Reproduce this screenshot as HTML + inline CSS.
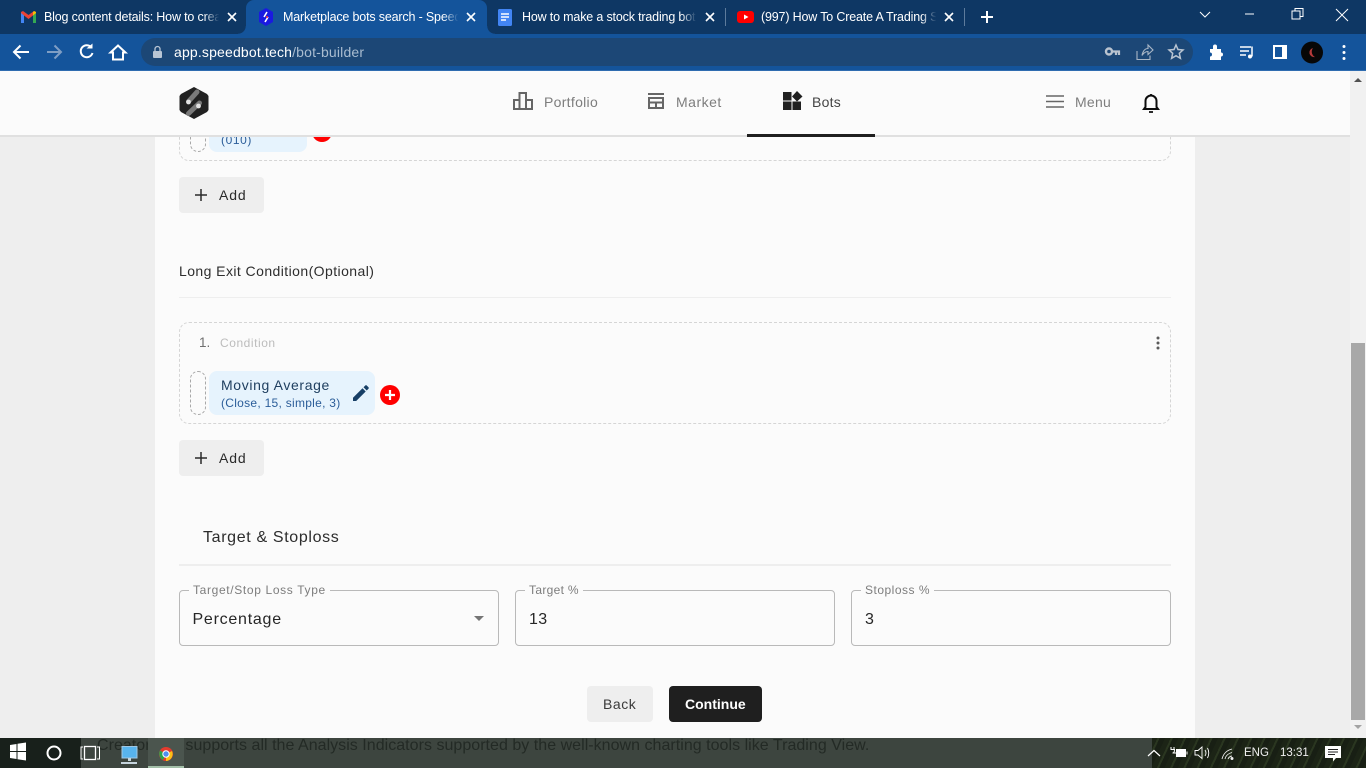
<!DOCTYPE html>
<html><head><meta charset="utf-8"><title>Bot Builder</title>
<style>
*{box-sizing:border-box}
html,body{margin:0;padding:0;width:1366px;height:768px;overflow:hidden;background:#eee;font-family:"Liberation Sans",sans-serif}
.a{position:absolute}
.t{position:absolute;white-space:nowrap;line-height:1}
svg{position:absolute;overflow:visible}
.fade{position:absolute;top:8px;width:18px;height:20px}
.ib{background:#fbfbfb;padding:0 4px}
.fs{position:absolute;top:590px;height:56px;width:320px;border:1px solid #b9b9b9;border-radius:4px}
.tab{position:absolute;top:11px;font-size:12.5px;line-height:1;color:#fff;white-space:nowrap;overflow:hidden;width:175px;letter-spacing:-.17px}
</style></head><body>
<!-- chrome tab strip -->
<div class="a" style="left:0;top:0;width:1366px;height:34px;background:#0e3764"></div>
<div class="a" style="left:0;top:34px;width:1366px;height:37px;background:#14549b"></div>
<div class="a" style="left:0;top:70px;width:1366px;height:1px;background:#2f6cb0"></div>
<div class="a" style="left:246px;top:0;width:241px;height:35px;background:#14549b;border-radius:8px 8px 0 0"></div>
<div class="a" style="left:238px;top:26px;width:8px;height:8px;background:radial-gradient(circle at 0 0,#0e3764 7.500px,#14549b 8px)"></div>
<div class="a" style="left:487px;top:26px;width:8px;height:8px;background:radial-gradient(circle at 100% 0,#0e3764 7.500px,#14549b 8px)"></div>
<!-- tab icons -->
<svg style="left:21px;top:10px" width="15" height="14" viewBox="0 0 15 14"><path d="M0 2V13H3V5.500L7.500 9 12 5.500V13H15V2L13 1 7.500 5 2 1Z" fill="#ea4335"/><path d="M0 3V13H3V5.500Z" fill="#4285f4"/><path d="M15 3V13H12V5.500Z" fill="#34a853"/><path d="M15 2 13 1 12 2V5.500L15 3Z" fill="#fbbc04"/></svg>
<svg style="left:258px;top:8px" width="16" height="18" viewBox="0 0 16 18"><path d="M8 0 15 4V14L8 18 1 14V4Z" fill="#1a1ae0"/><path d="M9 4 6 9M10 9 7 14" stroke="#fff" stroke-width="1.600"/><circle cx="9" cy="9" r="1" fill="#f33"/></svg>
<svg style="left:498px;top:9px" width="14" height="17" viewBox="0 0 14 17"><rect width="14" height="17" rx="1.500" fill="#4285f4"/><path d="M3 5H11M3 8H11M3 11H8" stroke="#fff" stroke-width="1.400"/></svg>
<svg style="left:737px;top:11px" width="17" height="12" viewBox="0 0 17 12"><rect width="17" height="12" rx="3" fill="#f00"/><path d="M7 3.500 11.500 6 7 8.500Z" fill="#fff"/></svg>
<div class="tab" style="left:44px">Blog content details: How to create</div>
<div class="tab" style="left:283px">Marketplace bots search - Speedbot</div>
<div class="tab" style="left:522px">How to make a stock trading bot</div>
<div class="tab" style="left:761px">(997) How To Create A Trading Strategy</div>
<div class="fade" style="left:204px;background:linear-gradient(90deg,rgba(14,55,100,0),#0e3764 85%)"></div>
<div class="fade" style="left:443px;background:linear-gradient(90deg,rgba(20,84,155,0),#14549b 85%)"></div>
<div class="fade" style="left:681px;background:linear-gradient(90deg,rgba(14,55,100,0),#0e3764 85%)"></div>
<div class="fade" style="left:921px;background:linear-gradient(90deg,rgba(14,55,100,0),#0e3764 85%)"></div>
<svg style="left:0;top:0" width="1366" height="71" viewBox="0 0 1366 71" fill="none" stroke="#fff" stroke-width="1.600">
<path d="M228 13 236 21M236 13 228 21M467 13 475 21M475 13 467 21M706 13 714 21M714 13 706 21M945 13 953 21M953 13 945 21"/>
<path d="M725.500 8V26M964.500 8V26" stroke="#5d7b9c" stroke-width="1"/>
<path d="M981 17H993M987 11V23" stroke-width="2"/>
<path d="M1200 12 1205 17 1210 12M1245 14H1254" stroke-width="1"/>
<path d="M1292 11H1300V19H1292ZM1295 11V8.500H1303V16.500H1300M1336 9 1348 21M1348 9 1336 21" stroke-width="1"/>
<path d="M29 52H14M20.500 45.500 14 52 20.500 58.500" stroke-width="2"/>
<path d="M47 52H61M54.500 45.500 61 52 54.500 58.500" stroke="#7f9ec4" stroke-width="2"/>
<path d="M91.500 47.500A6 6 0 1 0 92.500 53" stroke-width="2"/>
<path d="M86.500 48.500H92.500V43.500Z" fill="#fff" stroke="none"/>
<path d="M113 52.500V59.500H123V52.500H125.500L118 45.500 110.500 52.500Z" stroke-width="2"/>
</svg>
<!-- omnibox -->
<div class="a" style="left:141px;top:38px;width:1052px;height:28px;border-radius:14px;background:#1c4776"></div>
<svg style="left:153px;top:46px" width="9" height="12" viewBox="0 0 9 12"><rect y="5" width="9" height="7" rx="1" fill="#b8c5d4"/><path d="M2 5V3A2.500 2.500 0 0 1 7 3V5" fill="none" stroke="#b8c5d4" stroke-width="1.300"/></svg>
<div class="t" style="left:174px;top:45px;font-size:14px;letter-spacing:.17px;color:#fff">app.speedbot.tech<span style="color:#a9bcd0">/bot-builder</span></div>
<svg style="left:1100px;top:40px" width="260" height="26" viewBox="0 0 260 26" fill="none">
<circle cx="9" cy="11.500" r="3" stroke="#b9c3cf" stroke-width="2.400"/><path d="M12 11.500H19V15M16 11.500V15" stroke="#b9c3cf" stroke-width="2.200"/>
<path d="M37 11V19.500H50V15.500M42 15.500C43 10.500 45 8.500 48 8.500V5L53 10 48 14.500V11.500C46 11.500 44 12.500 42 15.500Z" stroke="#a9b6c6" stroke-width="1.100"/>
<path d="M76 5 78 9.500 83 10 79.300 13.300 80.400 18.300 76 15.700 71.600 18.300 72.700 13.300 69 10 74 9.500Z" stroke="#b9c4d1" stroke-width="1.500"/>
<path d="M110 9H113V6.500A2 2 0 0 1 117 6.500V9H121V12.500A2 2 0 0 1 121 16.500V20H110V16.500A2 2 0 0 0 110 12.500Z" fill="#fff"/>
<path d="M140 7H151M140 11H149M140 15H146M152 6.500V16.500" stroke="#fff" stroke-width="1.500"/><circle cx="150" cy="16.500" r="2" fill="#fff"/>
<rect x="174" y="6" width="12" height="12" stroke="#fff" stroke-width="2"/><rect x="182" y="6" width="4" height="12" fill="#fff"/>
<circle cx="212" cy="12.500" r="11" fill="#070707"/><path d="M213 8A4.500 4.500 0 0 0 215 17 6 6 0 0 1 213 8Z" fill="#b53a3a"/>
<circle cx="244" cy="6.500" r="1.500" fill="#fff"/><circle cx="244" cy="12.500" r="1.500" fill="#fff"/><circle cx="244" cy="18.500" r="1.500" fill="#fff"/>
</svg>

<!-- page -->
<div class="a" style="left:155px;top:71px;width:1040px;height:667px;background:#fbfbfb"></div>
<div class="a" style="left:1350px;top:71px;width:16px;height:667px;background:#f1f1f1"></div>
<div class="a" style="left:1351px;top:343px;width:14px;height:377px;background:#a8a8a8"></div>
<svg style="left:1350px;top:71px" width="16" height="667" viewBox="0 0 16 667"><path d="M8 7 12 11H4Z" fill="#505050"/><path d="M4 654H12L8 658Z" fill="#a3a3a3"/></svg>

<!-- first condition remainder -->
<div class="a" style="left:179px;top:100px;width:992px;height:61px;border:1px dashed #d5d5d5;border-radius:10px"></div>
<div class="a" style="left:190px;top:108px;width:16px;height:44px;border:1px dashed #a8a8a8;border-radius:8px"></div>
<div class="a" style="left:209px;top:108px;width:98px;height:44px;background:#e6f3fd;border-radius:8px"></div>
<div class="t" style="left:221px;top:134px;font-size:12px;letter-spacing:.6px;color:#2b5d99">(010)</div>
<div class="a" style="left:285px;top:136px;width:3px;height:1px;background:#3f6a94"></div>
<div class="a" style="left:312px;top:122px;width:20px;height:20px;border-radius:50%;background:#f00"></div>

<!-- header -->
<div class="a" style="left:0;top:71px;width:1350px;height:64px;background:#fbfbfb"></div>
<div class="a" style="left:0;top:135px;width:1350px;height:2px;background:#e0e0e0"></div>
<div class="a" style="left:747px;top:134px;width:128px;height:3px;background:#1f1f1f"></div>
<svg style="left:179px;top:87px" width="30" height="32" viewBox="0 0 30 32"><path d="M15 0 28 7 29.500 9V23L28 25 15 32 2 25 .500 23V9L2 7Z" fill="#212121"/><path d="M9.500 14.500 18 5M9.500 26.500 20.500 16" stroke="#7a7a7a" stroke-width="5" stroke-linecap="round" fill="none"/><circle cx="9.500" cy="15" r="2.400" fill="#e2e2e2"/><circle cx="19.500" cy="19" r="2.400" fill="#e2e2e2"/></svg>
<svg style="left:513px;top:92px" width="20" height="18" viewBox="0 0 20 18" fill="none" stroke="#666" stroke-width="2"><path d="M1 17V8H6.500V17ZM6.500 17V1H13V17ZM13 17V8H19V17Z"/></svg>
<div class="t" style="left:544px;top:95px;font-size:14px;letter-spacing:.3px;color:#7d7d7d">Portfolio</div>
<svg style="left:647px;top:93px" width="18" height="16" viewBox="0 0 18 16" fill="none" stroke="#666" stroke-width="2"><path d="M1 1H17M1 5H17M2 5V15H16V5M2 9.500H16M9 9.500V15"/></svg>
<div class="t" style="left:676px;top:95px;font-size:14px;letter-spacing:.5px;color:#7d7d7d">Market</div>
<svg style="left:783px;top:91px" width="20" height="19" viewBox="0 0 20 19" fill="#212121"><rect y="1" width="8.500" height="8.500"/><rect y="10.500" width="8.500" height="8.500"/><rect x="9.500" y="10.500" width="8.500" height="8.500"/><path d="M14 0 19.500 5.500 14 10.500 9 5.500Z"/></svg>
<div class="t" style="left:812px;top:95px;font-size:14px;letter-spacing:.25px;color:#444">Bots</div>
<svg style="left:1046px;top:95px" width="18" height="13" viewBox="0 0 18 13" stroke="#666" stroke-width="1.600"><path d="M0 1H18M0 6.500H18M0 12H18"/></svg>
<div class="t" style="left:1075px;top:95px;font-size:14px;letter-spacing:.25px;color:#7d7d7d">Menu</div>
<svg style="left:1142px;top:93px" width="18" height="20" viewBox="0 0 18 20" fill="none" stroke="#0c0c0c" stroke-width="2"><path d="M2 16H16L14.500 14V8A5.500 5.500 0 0 0 3.500 8V14Z"/><path d="M7 19H11M9 1V2.500" stroke-width="1.800"/></svg>

<!-- Add 1 -->
<div class="a" style="left:179px;top:177px;width:85px;height:36px;background:#eee;border-radius:4px"></div>
<svg style="left:195px;top:189px" width="12" height="12" viewBox="0 0 12 12" stroke="#2a2a2a" stroke-width="1.500"><path d="M0 6H12M6 0V12"/></svg>
<div class="t" style="left:219px;top:188px;font-size:14px;letter-spacing:.9px;color:#2a2a2a">Add</div>

<div class="t" style="left:179px;top:264px;font-size:14px;letter-spacing:.43px;color:#2e2e2e">Long Exit Condition(Optional)</div>
<div class="a" style="left:179px;top:297px;width:992px;height:1px;background:#eee"></div>

<!-- condition box -->
<div class="a" style="left:179px;top:322px;width:992px;height:102px;border:1px dashed #d5d5d5;border-radius:10px"></div>
<div class="t" style="left:199px;top:336px;font-size:13.500px;color:#6f6f6f">1.</div>
<div class="t" style="left:220px;top:337px;font-size:12px;letter-spacing:.55px;color:#bcbcbc">Condition</div>
<svg style="left:1156px;top:336px" width="4" height="14" viewBox="0 0 4 14" fill="#5a5a5a"><circle cx="2" cy="2" r="1.500"/><circle cx="2" cy="7" r="1.500"/><circle cx="2" cy="12" r="1.500"/></svg>
<div class="a" style="left:190px;top:371px;width:16px;height:44px;border:1px dashed #a8a8a8;border-radius:8px"></div>
<div class="a" style="left:209px;top:371px;width:166px;height:44px;background:#e6f3fd;border-radius:8px"></div>
<div class="t" style="left:221px;top:378px;font-size:14px;letter-spacing:.63px;color:#1f3f60">Moving Average</div>
<div class="t" style="left:221px;top:397px;font-size:12px;letter-spacing:.28px;color:#2b5d99">(Close, 15, simple, 3)</div>
<svg style="left:353px;top:385px" width="16" height="16" viewBox="0 0 16 16"><path d="M0 16V12.800L9.500 3.300 12.700 6.500 3.200 16ZM10.500 2.300 12.300.5A1 1 0 0 1 13.700.5L15.500 2.300A1 1 0 0 1 15.500 3.700L13.700 5.500Z" fill="#173f66"/></svg>
<div class="a" style="left:380px;top:385px;width:20px;height:20px;border-radius:50%;background:#f00"></div>
<svg style="left:380px;top:385px" width="20" height="20" viewBox="0 0 20 20" stroke="#fff" stroke-width="2.200"><path d="M5 10H15M10 5V15"/></svg>

<!-- Add 2 -->
<div class="a" style="left:179px;top:440px;width:85px;height:36px;background:#eee;border-radius:4px"></div>
<svg style="left:195px;top:452px" width="12" height="12" viewBox="0 0 12 12" stroke="#2a2a2a" stroke-width="1.500"><path d="M0 6H12M6 0V12"/></svg>
<div class="t" style="left:219px;top:451px;font-size:14px;letter-spacing:.9px;color:#2a2a2a">Add</div>

<div class="t" style="left:203px;top:530px;font-size:16px;letter-spacing:.65px;color:#2c2c2c">Target &amp; Stoploss</div>
<div class="a" style="left:179px;top:564px;width:992px;height:2px;background:#eee"></div>

<!-- fields -->
<div class="fs" style="left:179px"></div>
<div class="fs" style="left:515px"></div>
<div class="fs" style="left:851px"></div>
<div class="t ib" style="left:189px;top:584px;font-size:12px;letter-spacing:.65px;color:#7d7d7d">Target/Stop Loss Type</div>
<div class="t ib" style="left:525px;top:584px;font-size:12px;letter-spacing:.32px;color:#7d7d7d">Target %</div>
<div class="t ib" style="left:861px;top:584px;font-size:12px;letter-spacing:.5px;color:#7d7d7d">Stoploss %</div>
<div class="t" style="left:192.500px;top:612px;font-size:16px;letter-spacing:.75px;color:#262626">Percentage</div>
<svg style="left:474px;top:616px" width="10" height="5" viewBox="0 0 10 5"><path d="M0 0H10L5 5Z" fill="#757575"/></svg>
<div class="t" style="left:529px;top:612px;font-size:16px;letter-spacing:.4px;color:#262626">13</div>
<div class="t" style="left:865px;top:612px;font-size:16px;color:#262626">3</div>

<!-- buttons -->
<div class="a" style="left:587px;top:686px;width:66px;height:36px;background:#eee;border-radius:4px"></div>
<div class="t" style="left:603px;top:697px;font-size:14px;letter-spacing:.55px;color:#3a3a3a">Back</div>
<div class="a" style="left:669px;top:686px;width:93px;height:36px;background:#1f1f1f;border-radius:4px"></div>
<div class="t" style="left:685px;top:697px;font-size:14px;font-weight:bold;color:#fff">Continue</div>

<!-- taskbar -->
<div class="a" style="left:0;top:738px;width:1366px;height:30px;background:#3d453f"></div>
<div class="a" style="left:0;top:738px;width:81px;height:30px;background:#18201b"></div>
<div class="a" style="left:1152px;top:738px;width:214px;height:30px;background:repeating-linear-gradient(115deg,#1c2416 0 5px,#2a3620 5px 7px,#181f14 7px 12px)"></div>
<div class="t" style="left:97px;top:738px;font-size:16px;letter-spacing:.03px;color:#232a25">Creator tool supports all the Analysis Indicators supported by the well-known charting tools like Trading View.</div>
<div class="a" style="left:148px;top:738px;width:36px;height:30px;background:#4b554e"></div>
<div class="a" style="left:148px;top:766px;width:36px;height:2px;background:#a3bfa8"></div>
<svg style="left:0;top:738px" width="1366" height="30" viewBox="0 0 1366 30" fill="none">
<path d="M10 13V7L16.500 6V13ZM17.500 5.800 26 4.500V13H17.500ZM10 14H16.500V21L10 20ZM17.500 14H26V22.500L17.500 21.200Z" fill="#fff"/>
<circle cx="54" cy="15" r="6.500" stroke="#fff" stroke-width="2"/>
<rect x="84.500" y="8.500" width="11" height="13" stroke="#fff" stroke-width="1.300"/><path d="M83 9H81V21H83M97 9H99.500V21H97" stroke="#fff"/>
<path d="M122 8.500H137V20H122Z" fill="#58b4ee" stroke="#9fc7e4"/><path d="M128 20H131V23H128ZM121 24H137V26H121Z" fill="#c6d4dd"/>
<circle cx="166" cy="16" r="7" fill="#e33b2e"/><path d="M166 16 172 13A7 7 0 0 1 166 23Z" fill="#fbc116"/><path d="M166 16 163 22A7 7 0 0 1 160 12.500Z" fill="#2ba24c"/><circle cx="166" cy="16" r="3.200" fill="#4f8ff0" stroke="#fff"/>
<path d="M1148 18 1154 12.500 1160 18" stroke="#fff" stroke-width="1.200"/>
<rect x="1176.500" y="11.500" width="9" height="7" fill="#fff" stroke="#fff"/><path d="M1187 13.500V16.500" stroke="#fff"/><path d="M1171 9V11.500M1174 9V11.500M1170.500 11.500H1174.500C1174.500 14 1173.500 15 1172.500 15V15H1176" stroke="#fff"/>
<path d="M1195 12.500H1198L1202 9V20.500L1198 17H1195ZM1205 12Q1207 15 1205 18M1207.500 10Q1210 15 1207.500 20" stroke="#fff" stroke-width=".9"/>
<path d="M1222 21Q1224 13 1232 11M1225 21Q1226 16 1232 14.500M1228 21Q1229 18.500 1232 18" stroke="#eee" stroke-width=".9"/><circle cx="1232" cy="20.500" r="1.500" fill="#eee"/>
<path d="M1325 8H1341V20H1336L1333 23.500V20H1325Z" fill="#fff"/><path d="M1328 11.500H1338M1328 14H1338M1328 16.500H1335" stroke="#222"/>
</svg>
<div class="t" style="left:1244px;top:748px;font-size:11.500px;color:#f0f0f0">ENG</div>
<div class="t" style="left:1280px;top:748px;font-size:11.500px;color:#f0f0f0">13:31</div>
</body></html>
